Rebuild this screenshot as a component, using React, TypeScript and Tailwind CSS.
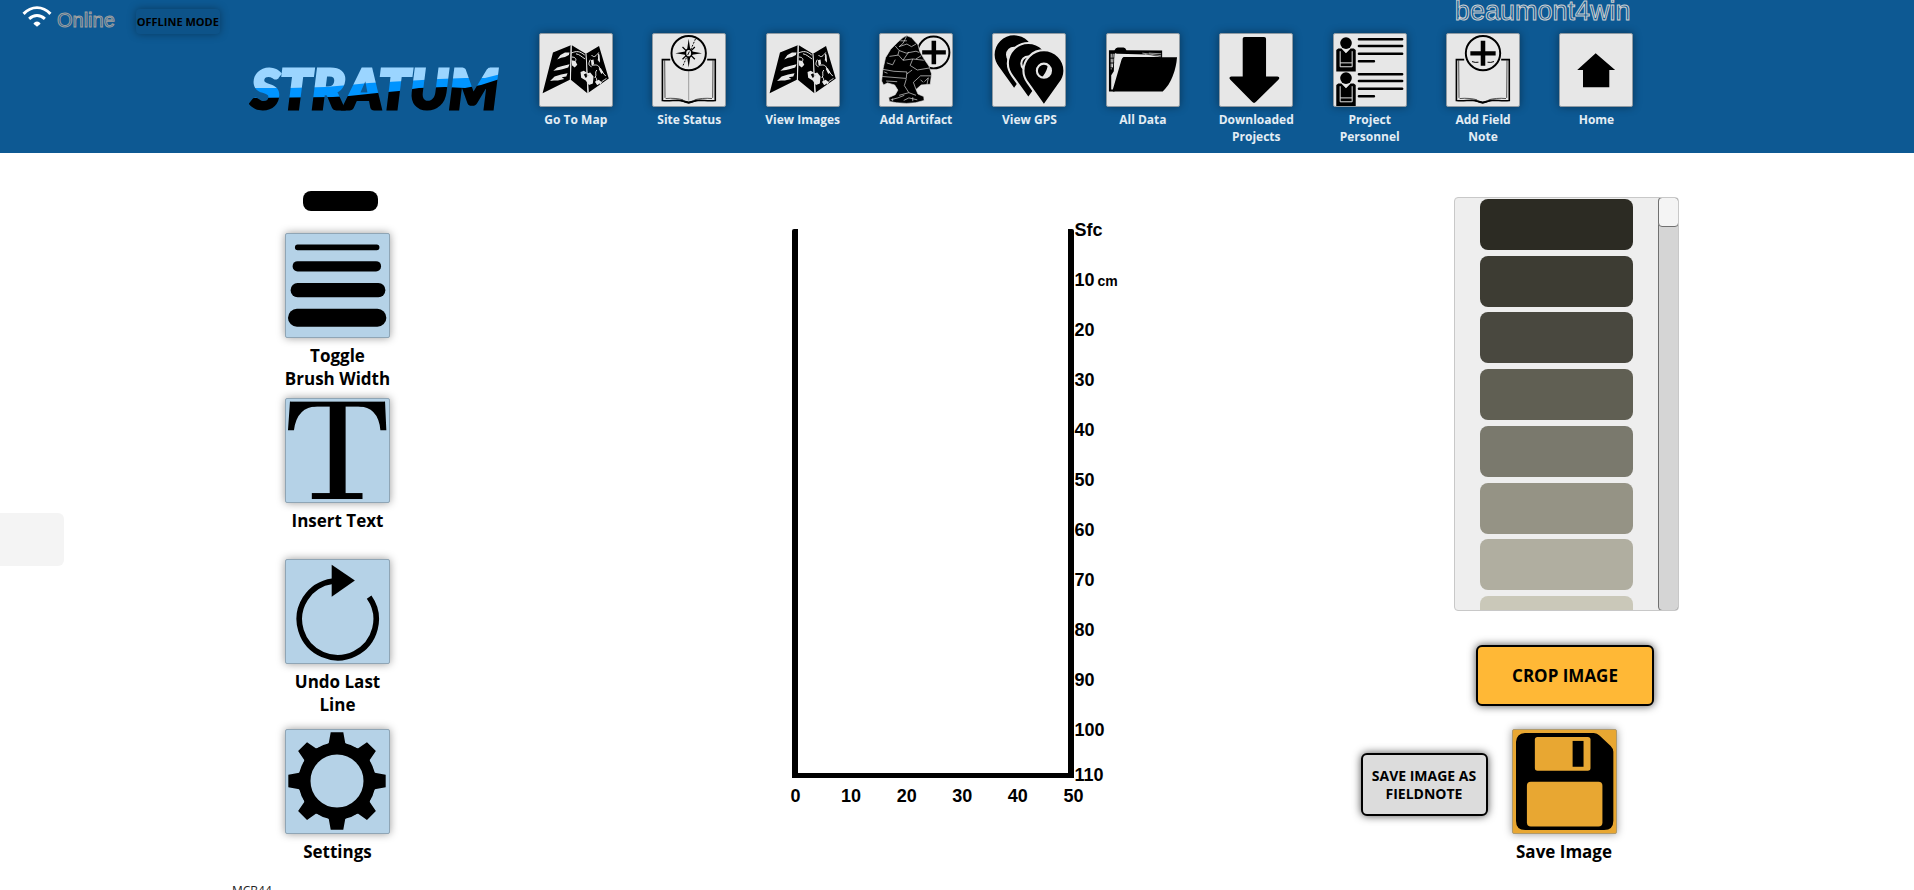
import React from "react";

const nav: { label: string; icon: React.ReactNode }[] = [
  { label: "Go To Map", icon: <MapIcon /> },
  { label: "Site Status", icon: <CompassBookIcon /> },
  { label: "View Images", icon: <MapIcon /> },
  { label: "Add Artifact", icon: <ArtifactIcon /> },
  { label: "View GPS", icon: <PinsIcon /> },
  { label: "All Data", icon: <FolderIcon /> },
  { label: "Downloaded Projects", icon: <DownIcon /> },
  { label: "Project Personnel", icon: <PersonnelIcon /> },
  { label: "Add Field Note", icon: <FieldNoteIcon /> },
  { label: "Home", icon: <HomeIcon /> },
];

const tools: { label: string; icon: React.ReactNode; space: string }[] = [
  { label: "Toggle Brush Width", icon: <BrushIcon />, space: "mt-[22px]" },
  { label: "Insert Text", icon: <TextIcon />, space: "mt-2" },
  { label: "Undo Last Line", icon: <UndoIcon />, space: "mt-[27px]" },
  { label: "Settings", icon: <GearIcon />, space: "mt-[13px]" },
];

const swatches = [
  "bg-[#2c2b23]",
  "bg-[#3d3c33]",
  "bg-[#49483f]",
  "bg-[#605f53]",
  "bg-[#7a796d]",
  "bg-[#959385]",
  "bg-[#b0aea0]",
  "bg-[#cac8b9]",
];

const depths = ["Sfc", "10", "20", "30", "40", "50", "60", "70", "80", "90", "100", "110"];
const widths = ["0", "10", "20", "30", "40", "50"];

function Icon({ children }: { children: React.ReactNode }) {
  return (
    <svg viewBox="1 1 222 222" className="size-full" aria-hidden="true">
      {children}
    </svg>
  );
}

function ToolSvg({ children }: { children: React.ReactNode }) {
  return (
    <svg viewBox="2 2 311 311" className="size-full" aria-hidden="true">
      {children}
    </svg>
  );
}

function MapIcon() {
  return (
    <Icon>
      <path d="M41 58 96 36 93 142 9 184ZM99 36 142 62 147 184 96 142ZM143 62 183 38 213 138 150 182Z" />
      <g fill="none" stroke="#e7e7e7" strokeWidth="3">
        <path d="M97 60c18-8 26-6 42 6M99 72c12 0 16 8 10 14M112 62c12 2 18 10 28 16M160 66c8 10 14 2 22-8M156 80c-6 12-6 18 4 22M182 62c-4 12 4 16 2 26M162 98c14-4 22 0 24 12M176 112c-8 8 2 16-6 24M188 110c8 8 6 14 16 20M172 134c8 6 0 14 6 24M206 138c-8 6-14 6-20 18" />
      </g>
      <path
        d="M54 80l10-14 14-8 14 0-2 8-12 6-12 2ZM42 114l12-10 16-4 22-6-4 10-18 6-10 2ZM32 146l14-14 20-6 20-4-4 10-14 2 8 6-20 4-12 0ZM98 82l12 2 6 12-8 8-8-6ZM126 118l10-4 12 8 8-2 10 12-2 22-12 4-10-14-14-8ZM158 82l8-2 2 14-8 4ZM182 60l3 8 0 18-6-4ZM182 108l6-2 8 14-6 4ZM170 148l12-6 10 8-14 8Z"
        fill="#e7e7e7"
      />
      <path d="M136 126l8-4 6 8-8 7Z" />
      <path d="M143 62 150 182M97 36 95 142" stroke="#e7e7e7" strokeWidth="3" />
    </Icon>
  );
}

function BookOutline() {
  return (
    <>
      <g fill="none" stroke="#000" strokeWidth="5">
        <path d="M54 80H30V206c20 3 40-2 56 0 12 2 18 6 25 6s13-4 25-6c16-2 36 3 57 0V80H168" />
      </g>
      <g fill="none" stroke="#000" strokeWidth="2">
        <path d="M37 82 38 198M186 82 185 198M40 200c20-2 40 0 54 4M183 200c-20-2-40 0-54 4" />
      </g>
      <path d="M76 207c18-4 28 2 35 4 7-2 17-8 35-4-14 0-24 8-35 9-11-1-21-9-35-9Z" />
    </>
  );
}

function CompassBookIcon() {
  return (
    <Icon>
      <BookOutline />
      <path d="M111 116V206" stroke="#777" strokeWidth="2" />
      <circle cx="111" cy="60" r="53" fill="#e7e7e7" stroke="#000" strokeWidth="6" />
      <path d="M111 16 116 50 111 60 106 50ZM111 104 116 70 111 60 106 70ZM70 60 100 55 111 60 100 65ZM152 60 122 55 111 60 122 65Z" />
      <g stroke="#000" strokeWidth="4">
        <path d="M92 41l12 12M130 79l-12-12M130 41l-12 12M92 79l12-12" />
        <path d="M132 16 118 48M104 74 92 102" strokeDasharray="6 4" strokeWidth="3" />
      </g>
      <ellipse cx="111" cy="60" rx="10" ry="12" fill="#e7e7e7" stroke="#000" strokeWidth="5" />
      <path d="M113 55l-5 11" stroke="#000" strokeWidth="3" />
    </Icon>
  );
}

function ArtifactIcon() {
  return (
    <Icon>
      <circle cx="166" cy="58" r="49" fill="none" stroke="#000" strokeWidth="6" />
      <path d="M160 22h14v29h30v13h-30v30h-14V64h-29V51h29Z" />
      <path
        d="M83 6 98 12 118 34 124 56 138 80 152 100 160 124 156 156 128 158 112 172 118 186 136 194 137 206 110 213 83 215 52 213 30 209 28 197 48 188 56 174 46 158 24 152 12 158 6 146 10 110 18 74 34 48 56 26 72 12Z"
        stroke="#e7e7e7"
        strokeWidth="2"
      />
      <g fill="none" stroke="#e7e7e7" strokeWidth="2">
        <path d="M83 8 72 30 60 40 84 32 98 40 112 32M48 38 60 52 82 60 112 54 122 58M30 70 58 66 72 82 90 56M72 82 102 78 136 82M102 78 94 98 116 112 152 106M10 110 44 116 84 118 82 138 8 132M84 124 100 112M82 140 76 160 90 182 60 190M90 182 112 190M22 90 40 96 48 80M112 172 104 150 126 130 158 130M54 176 30 160M74 206 90 198 116 204M34 204 56 198 76 190M20 146 54 148M64 22 84 22M128 68 112 78M60 52 56 66M138 148 150 136 146 156" />
        <path d="M14 118 24 122M126 142l8 8M40 200v8M102 196v12" />
      </g>
    </Icon>
  );
}

function PinsIcon() {
  const pin =
    "M0 102L-47 36C-54 26-60 16-60 0A60 60 0 1 1 60 0C60 16 54 26 47 36ZM0-25A25 25 0 1 0 0 25A25 25 0 1 0 0-25Z";
  return (
    <Icon>
      <path d={pin} transform="translate(66 65)" fillRule="evenodd" />
      <path d={pin} transform="translate(110 92)" fill="#e7e7e7" stroke="#e7e7e7" strokeWidth="13" />
      <path d={pin} transform="translate(110 92)" fillRule="evenodd" />
      <path d={pin} transform="translate(158 114)" fill="#e7e7e7" stroke="#e7e7e7" strokeWidth="13" />
      <path d={pin} transform="translate(158 114)" fillRule="evenodd" />
    </Icon>
  );
}

function FolderIcon() {
  return (
    <Icon>
      <path d="M7 51H24Q28 43 34 43H52Q58 43 61 51L171 52V80H60L24 178H7Z" />
      <path d="M36 62 120 64 163 72H52Q48 74 46 80L19 172H14V128L22 116 24 62Z" fill="#e7e7e7" />
      <path d="M14 62V110M20 62 18 104M28 60 24 104" stroke="#e7e7e7" strokeWidth="3" strokeDasharray="12 3" />
      <path d="M110 60 168 68M130 60 168 62M118 65 168 72" stroke="#e7e7e7" strokeWidth="2" />
      <path d="M58 73H217C214 110 200 154 173 178H19L52 78Q54 73 58 73Z" />
    </Icon>
  );
}

function DownIcon() {
  return (
    <Icon>
      <path d="M77 10H137Q143 10 143 16V132H178Q188 134 181 142L112 210Q106 217 100 210L33 142Q26 134 36 132H71V16Q71 10 77 10Z" />
    </Icon>
  );
}

function Person({ y }: { y: number }) {
  return (
    <g transform={`translate(0 ${y})`}>
      <circle cx="38" cy="29" r="18" />
      <path d="M8 50 14 46 24 46 38 60 52 46 62 46 68 50V117H8Z" />
      <path
        d="M20 54V102M57 54V102M20 90H57M20 102H57M27 46 38 57 49 46"
        fill="none"
        stroke="#e7e7e7"
        strokeWidth="3"
      />
      <path
        d="M78 17H211M78 38H211M78 62H211M78 85H124"
        stroke="#000"
        strokeWidth="8"
        strokeLinecap="round"
      />
    </g>
  );
}

function PersonnelIcon() {
  return (
    <Icon>
      <Person y={0} />
      <Person y={108} />
    </Icon>
  );
}

function FieldNoteIcon() {
  return (
    <Icon>
      <BookOutline />
      <circle cx="112" cy="60" r="53" fill="#e7e7e7" stroke="#000" strokeWidth="6" />
      <path d="M78 86q10 4 20 2M126 88q10 2 20-2" fill="none" stroke="#000" strokeWidth="3" />
      <path d="M105 22h14v32h32v13h-32v32h-14V67H73V54h32Z" />
    </Icon>
  );
}

function HomeIcon() {
  return (
    <Icon>
      <path d="M111 60 171 112H153V165H72V112H54Z" />
    </Icon>
  );
}

function BrushIcon() {
  return (
    <ToolSvg>
      <rect x="29" y="34" width="255" height="17" rx="8" />
      <rect x="22" y="84" width="267" height="31" rx="15" />
      <rect x="16" y="150" width="286" height="43" rx="21" />
      <rect x="8" y="228" width="297" height="54" rx="27" />
    </ToolSvg>
  );
}

function TextIcon() {
  return (
    <ToolSvg>
      <rect x="134" y="12" width="48" height="280" />
      <rect x="80" y="286" width="153" height="18" />
      <rect x="14" y="10" width="287" height="15" />
      <path d="M14 10 8 96H26Q36 25 96 25ZM301 10 305 96H287Q280 25 220 25Z" />
    </ToolSvg>
  );
}

function UndoIcon() {
  return (
    <ToolSvg>
      <path d="M253 114A116 116 0 1 1 142 66" fill="none" stroke="#000" strokeWidth="17" />
      <path d="M140 16 210 64 140 113Z" />
    </ToolSvg>
  );
}

function GearIcon() {
  const turns = [0, 45, 90, 135, 180, 225, 270, 315];
  return (
    <ToolSvg>
      <circle cx="156" cy="156" r="98" fill="none" stroke="#000" strokeWidth="36" />
      {turns.map((t) => (
        <path key={t} d="M137 9H175L181 42 196 50 190 68H122L116 50 131 42Z" transform={`rotate(${t} 156 156)`} />
      ))}
    </ToolSvg>
  );
}

function SaveIcon() {
  return (
    <ToolSvg>
      <path d="M38 11H246Q256 11 264 19L297 50Q305 58 305 68V276Q305 304 277 304H39Q11 304 11 276V38Q13 12 38 11Z" />
      <rect x="68" y="23" width="168" height="102" rx="8" fill="#e8a732" />
      <rect x="182" y="35" width="33" height="78" />
      <rect x="44" y="158" width="228" height="135" rx="12" fill="#e8a732" />
    </ToolSvg>
  );
}

function WifiIcon() {
  return (
    <svg viewBox="0 0 90 64" className="h-[21px] w-[30px]" aria-hidden="true">
      <g fill="none" stroke="#fff">
        <path d="M4 24Q22 5 45 5T86 24" strokeWidth="9" />
        <path d="M21 39Q32 29 45 29T69 39" strokeWidth="9" />
      </g>
      <path d="M45 63 34 54Q38 47 45 47T56 54Z" fill="#fff" />
    </svg>
  );
}

function Logo() {
  return (
    <svg viewBox="0 0 260 84" className="h-[84px] w-[260px] shrink-0" role="img" aria-label="Stratum">
      <defs>
        <pattern id="strata" patternUnits="userSpaceOnUse" width="260" height="84">
          <rect width="260" height="84" fill="#000" />
          <path d="M0 0H260V28L232 37 216 40 196 39 170 40 150 43 128 45 100 48 84 49 0 50Z" fill="#0094ff" />
          <path d="M0 0H260V24L236 30 216 30 190 31 156 33 120 35 100 37 76 39 40 40 0 40Z" fill="#9bd5ff" />
        </pattern>
      </defs>
      <text
        x="2"
        y="61"
        fill="url(#strata)"
        stroke="url(#strata)"
        strokeWidth="3"
        className="font-['Lato',sans-serif] text-[56px] font-black italic"
      >
        STRATUM
      </text>
    </svg>
  );
}

export default function App() {
  return (
    <div className="relative h-screen overflow-hidden bg-white font-['Open_Sans',sans-serif] text-black">
      <header className="flex h-[153px] items-start bg-[#0d5993]">
        <div className="flex w-[13%] shrink-0 items-start pt-[6px] pl-[22px]">
          <WifiIcon />
          <span className="ml-[5px] text-[20px] leading-7 text-[#0d5993] font-['Liberation_Sans',sans-serif] [-webkit-text-stroke:1px_#a0a0a0]">
            Online
          </span>
          <button className="mt-[3px] ml-[21px] h-[25px] w-[84px] shrink-0 rounded-sm bg-[#0d5389] text-[11px] leading-6 font-bold whitespace-nowrap shadow-[0_0_8px_rgba(0,0,0,0.35)]">
            OFFLINE MODE
          </button>
        </div>
        <div className="pt-[48px]">
          <Logo />
        </div>
        <div className="mr-[14.5%] ml-[27px] flex-1">
          <div className="-mt-[7px] mr-[6px] h-10 text-right text-[27px] leading-9 text-[#0d5993] font-['Liberation_Sans',sans-serif] [-webkit-text-stroke:1px_#d0d0d0]">
            beaumont4win
          </div>
          <nav className="flex items-start justify-between">
            {nav.map((item) => (
              <button key={item.label} className="flex w-20 flex-col items-center">
                <span className="size-[74px] overflow-hidden rounded-xs border border-[#8f9aa3] bg-[#e7e7e7] shadow-[0_0_8px_rgba(0,0,0,0.4)]">
                  {item.icon}
                </span>
                <span className="mt-1 text-[12px] leading-[17px] font-bold text-[#e4edf4]">{item.label}</span>
              </button>
            ))}
          </nav>
        </div>
      </header>

      <main className="grid grid-cols-[675fr_543fr_696fr] items-start">
        <section aria-label="Tools" className="flex flex-col items-center pt-[38px]">
          <div className="ml-1.5 h-5 w-[75px] rounded-lg bg-black" />
          {tools.map((tool) => (
            <button key={tool.label} className={`flex w-[108px] flex-col items-center ${tool.space}`}>
              <span className="size-[105px] overflow-hidden rounded-xs border border-[#8fa5b5] bg-[#b5d2e7] shadow-[0_0_8px_rgba(0,0,0,0.4)]">
                {tool.icon}
              </span>
              <span className="mt-[6px] text-[17px] leading-[23px] font-bold">{tool.label}</span>
            </button>
          ))}
        </section>

        <section
          aria-label="Profile canvas"
          className="flex flex-col items-center pt-[76px] font-['Liberation_Sans',sans-serif] text-[18px] leading-5 font-bold"
        >
          <div>
            <div className="flex">
              <div className="h-[549px] w-[282px] rounded-t-xs border-x-6 border-b-5 border-black" />
              <ol className="-mt-[9px] ml-px w-[27px]">
                {depths.map((d) => (
                  <li key={d} className="h-[50px] whitespace-nowrap nth-11:h-[45px] last:h-5">
                    {d}
                    {d === "10" && <span className="ml-[3px] text-[14px]">cm</span>}
                  </li>
                ))}
              </ol>
            </div>
            <ol className="mt-px -ml-4 flex w-[318px] justify-between">
              {widths.map((w) => (
                <li key={w} className="w-10 text-center">
                  {w}
                </li>
              ))}
            </ol>
          </div>
        </section>

        <section aria-label="Palette" className="flex flex-col items-center pt-[44px]">
          <div className="flex h-[414px] w-[225px] overflow-hidden rounded-sm border border-[#c8c8c8] bg-[#eeeeee]">
            <div className="flex h-[449px] flex-1 flex-col items-center justify-between pt-px">
              {swatches.map((s) => (
                <button key={s} aria-label="Munsell colour" className={`h-[51px] w-[153px] shrink-0 rounded-lg ${s}`} />
              ))}
            </div>
            <div className="-my-px -mr-px w-[21px] rounded-sm border border-[#707070] bg-[#d5d5d5]">
              <div className="-m-px h-[30px] rounded-sm border border-[#707070] bg-[#f4f4f4]" />
            </div>
          </div>
          <button className="mt-[34px] mr-0.5 h-[61px] w-[178px] rounded-md border-2 border-black bg-[#ffb836] text-[17px] font-bold shadow-[0_0_9px_rgba(0,0,0,0.7)]">
            CROP IMAGE
          </button>
          <div className="mt-[23px] mr-[155px] flex items-start gap-6">
            <button className="mt-6 h-[63px] w-[127px] rounded-md border-2 border-black bg-[#dcdcdc] text-[14px] leading-[18px] font-bold shadow-[0_0_9px_rgba(0,0,0,0.7)]">
              SAVE IMAGE AS FIELDNOTE
            </button>
            <button className="flex w-[105px] flex-col items-center">
              <span className="size-[105px] overflow-hidden rounded-xs border border-[#b09a6c] bg-[#e8a732] shadow-[0_0_8px_rgba(0,0,0,0.4)]">
                <SaveIcon />
              </span>
              <span className="mt-[6px] text-[17px] leading-[23px] font-bold whitespace-nowrap">Save Image</span>
            </button>
          </div>
        </section>
      </main>

      <p className="mt-[18px] ml-[232px] text-[12px] leading-5 text-[#222]">MCB44</p>

      <button
        aria-label="Open side panel"
        className="absolute top-[513px] left-0 h-[53px] w-16 rounded-r-md bg-[#f4f4f4]"
      />
    </div>
  );
}
